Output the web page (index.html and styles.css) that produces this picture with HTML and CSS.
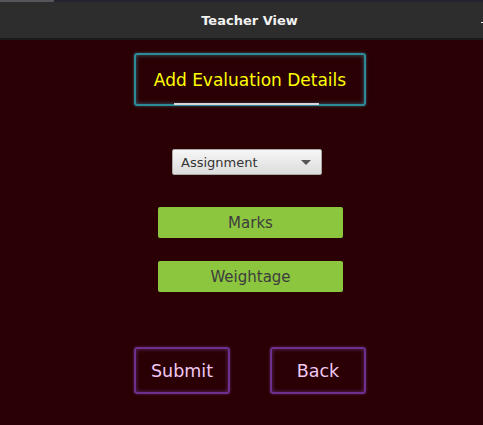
FILE: index.html
```html
<!DOCTYPE html>
<html>
<head>
<meta charset="utf-8">
<link rel="stylesheet" href="styles.css">
</head>
<body>
<div class="window">
  <div class="topstrip"><span class="strip-left"></span></div>
  <div class="titlebar">
    <span class="title">Teacher View</span>
    <span class="minimize"></span>
  </div>
  <div class="main">
    <div class="heading">
      <span class="heading-text">Add Evaluation Details</span>
      <span class="underline"></span>
    </div>
    <div class="select">
      <span class="select-text">Assignment</span>
      <span class="arrow"></span>
    </div>
    <div class="field marks">Marks</div>
    <div class="field weight">Weightage</div>
    <div class="buttons">
      <div class="btn">Submit</div>
      <div class="btn">Back</div>
    </div>
  </div>
</div>
</body>
</html>
```

FILE: styles.css
```css
* { box-sizing: border-box; }
html, body { margin: 0; padding: 0; }
body {
  width: 483px;
  height: 425px;
  overflow: hidden;
  background: #2a0004;
  font-family: "DejaVu Sans", sans-serif;
}
.window { width: 483px; height: 425px; display: flex; flex-direction: column; }
.topstrip {
  height: 2px;
  background: #23232f;
  display: flex;
}
.strip-left { width: 54px; height: 2px; background: #55555a; }
.titlebar {
  height: 38px;
  background: #2d2d2d;
  border-bottom: 2px solid #1c1a1a;
  display: flex;
  align-items: center;
  justify-content: center;
  position: relative;
}
.title {
  color: #f2f2f2;
  font-weight: bold;
  font-size: 13px;
  margin-left: 16px;
  margin-top: 1px;
}
.minimize {
  position: absolute;
  right: 0;
  top: 20px;
  width: 2px;
  height: 1px;
  background: #f2f2f2;
}
.main {
  display: flex;
  flex-direction: column;
  align-items: center;
  width: 500px;
  flex-shrink: 0;
}
.heading {
  margin-top: 13px;
  width: 232px;
  height: 53px;
  border: 2px solid #2f8a98;
  border-radius: 3px;
  box-shadow: 0 0 3px rgba(70, 180, 200, 0.5), inset 0 0 4px rgba(70, 180, 200, 0.55);
  display: flex;
  align-items: center;
  justify-content: center;
  position: relative;
}
.heading-text {
  color: #ffff00;
  font-size: 17px;
  margin-top: 1px;
}
.underline {
  position: absolute;
  left: 38px;
  bottom: -1px;
  width: 145px;
  height: 2px;
  background: #d8d8d8;
}
.select {
  margin-top: 43px;
  margin-left: -6px;
  width: 150px;
  height: 26px;
  border: 1px solid #a9a9a9;
  border-radius: 2px;
  background: linear-gradient(#f6f6f6, #dcdcdc);
  display: flex;
  align-items: center;
  padding-left: 8px;
  padding-right: 10px;
}
.select-text { color: #333; font-size: 13px; flex: 1; }
.arrow {
  width: 0;
  height: 0;
  border-left: 5px solid transparent;
  border-right: 5px solid transparent;
  border-top: 5px solid #555;
}
.field {
  width: 185px;
  height: 31px;
  background: #8cc63f;
  border-radius: 2px;
  color: #3c3c3c;
  font-size: 15px;
  display: flex;
  align-items: center;
  justify-content: center;
  margin-left: 1px;
}
.marks { margin-top: 32px; }
.weight { margin-top: 23px; }
.buttons {
  margin-top: 55px;
  display: flex;
  gap: 40px;
}
.btn {
  width: 96px;
  height: 47px;
  border: 2px solid #6f2f8f;
  border-radius: 3px;
  box-shadow: 0 0 3px rgba(140, 70, 180, 0.5), inset 0 0 4px rgba(140, 70, 180, 0.6);
  color: #f0c8f2;
  font-size: 17.5px;
  display: flex;
  align-items: center;
  justify-content: center;
}
```
